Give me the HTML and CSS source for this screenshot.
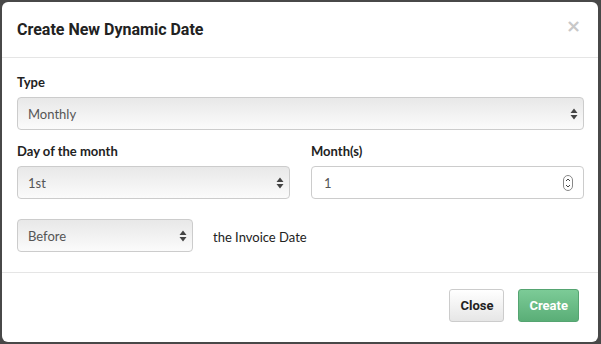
FILE: index.html
```html
<!DOCTYPE html>
<html lang="en">
<head>
    <meta charset="UTF-8">
    <title>Create New Dynamic Date</title>
    <link rel="stylesheet" href="styles.css">
</head>
<body>

    <!-- Modal dialog -->
    <div class="modal">
        <div class="modal-header">
            <h2 class="modal-title">Create New Dynamic Date</h2>
            <span class="modal-close">&times;</span>
        </div>

        <div class="modal-body">
            <div class="field">
                <label class="field-label">Type</label>
                <div class="select-box">
                    <span>Monthly</span>
                    <svg class="select-arrows" width="8" height="12" viewBox="0 0 8 12">
                        <path d="M4 0.5 L7.5 5 L0.5 5 Z M4 11.5 L7.5 7 L0.5 7 Z" fill="#444"/>
                    </svg>
                </div>
            </div>

            <div class="field-row">
                <div class="field">
                    <label class="field-label">Day of the month</label>
                    <div class="select-box">
                        <span>1st</span>
                        <svg class="select-arrows" width="8" height="12" viewBox="0 0 8 12">
                            <path d="M4 0.5 L7.5 5 L0.5 5 Z M4 11.5 L7.5 7 L0.5 7 Z" fill="#444"/>
                        </svg>
                    </div>
                </div>
                <div class="field">
                    <label class="field-label">Month(s)</label>
                    <div class="number-box">
                        <span>1</span>
                        <svg class="spinner" width="10" height="16" viewBox="0 0 10 16">
                            <rect x="0.5" y="0.5" width="9" height="15" rx="4.5" fill="#fff" stroke="#888"/>
                            <path d="M3 6 L5 4 L7 6 M3 10 L5 12 L7 10" fill="none" stroke="#444" stroke-width="1"/>
                        </svg>
                    </div>
                </div>
            </div>

            <div class="when-row">
                <div class="select-box small">
                    <span>Before</span>
                    <svg class="select-arrows" width="8" height="12" viewBox="0 0 8 12">
                        <path d="M4 0.5 L7.5 5 L0.5 5 Z M4 11.5 L7.5 7 L0.5 7 Z" fill="#444"/>
                    </svg>
                </div>
                <span class="when-text">the Invoice Date</span>
            </div>
        </div>

        <div class="modal-footer">
            <button class="btn btn-default">Close</button>
            <button class="btn btn-success">Create</button>
        </div>
    </div>

</body>
</html>
```

FILE: styles.css
```css
/* Reset */
body, html {
    margin: 0;
    padding: 0;
    height: 100%;
}

/* Dark backdrop behind the dialog */
body {
    background: #484848;
    font-family: 'Lato', sans-serif;
    color: #333;
    padding: 2px 3px 2px 2px;
    box-sizing: border-box;
}

/* Dialog box */
.modal {
    background: #fff;
    border-radius: 6px;
    height: 340px;
    display: flex;
    flex-direction: column;
}

/* Header */
.modal-header {
    display: flex;
    align-items: center;
    justify-content: space-between;
    height: 55px;
    padding: 0 17px 0 15px;
    border-bottom: 1px solid #e5e5e5;
}

.modal-title {
    margin: 0;
    font-family: 'Roboto', sans-serif;
    font-size: 16px;
    font-weight: 700;
    color: #222;
}

.modal-close {
    font-family: 'DejaVu Sans', sans-serif;
    font-size: 18px;
    font-weight: 700;
    color: #c8c8c8;
    margin-top: -8px;
}

/* Body */
.modal-body {
    flex: 1;
    padding: 16px 14px 0 15px;
}

.field {
    flex: 1;
}

.field-label {
    display: block;
    font-size: 13px;
    font-weight: 700;
    color: #222;
    margin-bottom: 7px;
}

.field-row {
    display: flex;
    gap: 21px;
    margin-top: 13px;
}

/* Select look-alike */
.select-box {
    position: relative;
    height: 31px;
    border: 1px solid #ccc;
    border-radius: 4px;
    background: linear-gradient(#e8e8e8, #fbfbfb);
    display: flex;
    align-items: center;
    padding: 0 10px;
    font-size: 13px;
    color: #555;
}

.select-arrows {
    position: absolute;
    right: 5px;
    top: 10px;
}

.select-box.small {
    width: 154px;
}

/* Number input */
.number-box {
    position: relative;
    height: 31px;
    border: 1px solid #ccc;
    border-radius: 4px;
    background: #fff;
    display: flex;
    align-items: center;
    padding: 0 12px;
    font-size: 13px;
    color: #555;
}

.spinner {
    position: absolute;
    right: 10px;
    top: 8px;
}

/* Before / after row */
.when-row {
    display: flex;
    align-items: center;
    gap: 20px;
    margin-top: 20px;
}

.when-text {
    font-size: 13px;
    color: #222;
    margin-top: 3px;
}

/* Footer */
.modal-footer {
    display: flex;
    justify-content: flex-end;
    gap: 14px;
    padding: 16px 19px 20px;
    border-top: 1px solid #e5e5e5;
}

.btn {
    height: 33px;
    padding: 0 10px;
    border-radius: 3px;
    font-family: 'Roboto', sans-serif;
    font-size: 13px;
    font-weight: 700;
    cursor: pointer;
}

.btn-default {
    background: linear-gradient(#fff, #e6e6e6);
    border: 1px solid #ccc;
    color: #222;
}

.btn-success {
    background: linear-gradient(#7ccb97, #5aae77);
    border: 1px solid #55a471;
    color: #fff;
}
```
